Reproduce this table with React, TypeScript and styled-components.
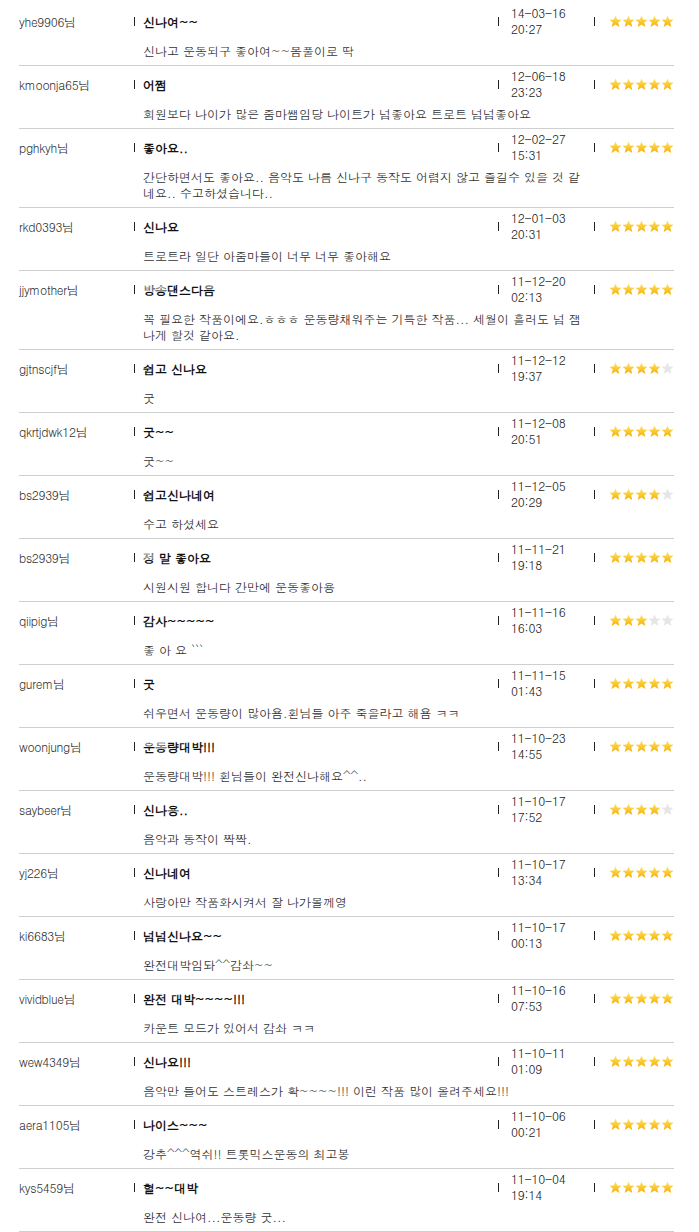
import React from 'react';
import styled, { createGlobalStyle } from 'styled-components';

const GlobalStyle = createGlobalStyle`
  body {
    margin: 0;
    background: #ffffff;
    font-family: Dotum, "Noto Sans CJK KR", "Noto Sans", sans-serif;
    font-size: 12px;
    color: #333;
  }
`;

const List = styled.div`
  padding-top: 3px;
  margin-left: 19px;
  width: 655px;
`;

const Row = styled.div`
  border-bottom: 1px solid #cfcfcf;
  padding: 2px 0 6px;
`;

const Head = styled.div`
  display: grid;
  grid-template-columns: 115px 364px 96px 1fr;
  align-items: center;
  height: 32px;
`;

const Cell = styled.div`
  display: flex;
  align-items: center;
  white-space: nowrap;
`;

const Bar = styled.span<{ $gap: number }>`
  display: inline-block;
  width: 1px;
  height: 9px;
  background: #222;
  margin-right: ${p => p.$gap}px;
  flex: none;
`;

const Name = styled.span`
  color: #333;
  letter-spacing: -0.3px;
`;

const Title = styled.span`
  font-weight: bold;
  color: #111;
`;

const DateText = styled.span`
  line-height: 16px;
  color: #222;
  letter-spacing: -0.2px;
`;

const Body = styled.div`
  margin-top: 6px;
  padding-left: 124px;
  width: 448px;
  line-height: 16px;
  color: #333;
  word-break: break-all;
`;

const Stars = styled.div`
  display: flex;
`;

function Star({ on }: { on: boolean }) {
  return (
    <svg width="13" height="13" viewBox="0 0 13 13">
      <defs>
        <linearGradient id="gold" x1="0" y1="0" x2="0" y2="1">
          <stop offset="0" stopColor="#ffe66a" />
          <stop offset="1" stopColor="#f4ae00" />
        </linearGradient>
      </defs>
      <polygon
        points="6.5,0.5 8.2,4.5 12.5,4.8 9.2,7.6 10.3,12 6.5,9.6 2.7,12 3.8,7.6 0.5,4.8 4.8,4.5"
        fill={on ? 'url(#gold)' : '#e6e6e6'}
      />
    </svg>
  );
}

type Review = {
  user: string;
  title: string;
  date: string;
  time: string;
  score: number;
  text: string;
};

const reviews: Review[] = [
  { user: 'yhe9906님', title: '신나여~~', date: '14-03-16', time: '20:27', score: 5, text: '신나고 운동되구 좋아여~~몸풀이로 딱' },
  { user: 'kmoonja65님', title: '어쩜', date: '12-06-18', time: '23:23', score: 5, text: '회원보다 나이가 많은 줌마쌤임당 나이트가 넘좋아요 트로트 넘넘좋아요' },
  { user: 'pghkyh님', title: '좋아요..', date: '12-02-27', time: '15:31', score: 5, text: '간단하면서도 좋아요.. 음악도 나름 신나구 동작도 어렵지 않고 즐길수 있을 것 같네요.. 수고하셨습니다..' },
  { user: 'rkd0393님', title: '신나요', date: '12-01-03', time: '20:31', score: 5, text: '트로트라 일단 아줌마들이 너무 너무 좋아해요' },
  { user: 'jjymother님', title: '방송댄스다음', date: '11-12-20', time: '02:13', score: 5, text: '꼭 필요한 작품이에요.ㅎㅎㅎ 운동량채워주는 기특한 작품... 세월이 흘러도 넘 잼나게 할것 같아요.' },
  { user: 'gjtnscjf님', title: '쉽고 신나요', date: '11-12-12', time: '19:37', score: 4, text: '굿' },
  { user: 'qkrtjdwk12님', title: '굿~~', date: '11-12-08', time: '20:51', score: 5, text: '굿~~' },
  { user: 'bs2939님', title: '쉽고신나네여', date: '11-12-05', time: '20:29', score: 4, text: '수고 하셨세요' },
  { user: 'bs2939님', title: '정 말 좋아요', date: '11-11-21', time: '19:18', score: 5, text: '시원시원 합니다 간만에 운동좋아용' },
  { user: 'qiipig님', title: '감사~~~~~', date: '11-11-16', time: '16:03', score: 3, text: '좋 아 요 ```' },
  { user: 'gurem님', title: '굿', date: '11-11-15', time: '01:43', score: 5, text: '쉬우면서 운동량이 많아욤.횐님들 아주 죽을라고 해욤 ㅋㅋ' },
  { user: 'woonjung님', title: '운동량대박!!!', date: '11-10-23', time: '14:55', score: 5, text: '운동량대박!!! 횐님들이 완전신나해요^^..' },
  { user: 'saybeer님', title: '신나용..', date: '11-10-17', time: '17:52', score: 4, text: '음악과 동작이 짝짝.' },
  { user: 'yj226님', title: '신나네여', date: '11-10-17', time: '13:34', score: 5, text: '사랑아만 작품화시켜서 잘 나가볼께영' },
  { user: 'ki6683님', title: '넘넘신나요~~', date: '11-10-17', time: '00:13', score: 5, text: '완전대박임돠^^감솨~~' },
  { user: 'vividblue님', title: '완전 대박~~~~!!!', date: '11-10-16', time: '07:53', score: 5, text: '카운트 모드가 있어서 감솨 ㅋㅋ' },
  { user: 'wew4349님', title: '신나요!!!', date: '11-10-11', time: '01:09', score: 5, text: '음악만 들어도 스트레스가 확~~~~!!! 이런 작품 많이 올려주세요!!!' },
  { user: 'aera1105님', title: '나이스~~~', date: '11-10-06', time: '00:21', score: 5, text: '강추^^^역쉬!! 트롯믹스운동의 최고봉' },
  { user: 'kys5459님', title: '헐~~대박', date: '11-10-04', time: '19:14', score: 5, text: '완전 신나여...운동량 굿...' },
];

function ReviewRow({ r }: { r: Review }) {
  return (
    <Row>
      <Head>
        <Cell><Name>{r.user}</Name></Cell>
        <Cell><Bar $gap={8} /><Title>{r.title}</Title></Cell>
        <Cell>
          <Bar $gap={12} />
          <DateText>{r.date}<br />{r.time}</DateText>
        </Cell>
        <Cell>
          <Bar $gap={14} />
          <Stars>
            {[1, 2, 3, 4, 5].map(i => <Star key={i} on={i <= r.score} />)}
          </Stars>
        </Cell>
      </Head>
      <Body>{r.text}</Body>
    </Row>
  );
}

export default function App() {
  return (
    <>
      <GlobalStyle />
      <List>
        {reviews.map((r, i) => <ReviewRow key={i} r={r} />)}
      </List>
    </>
  );
}
